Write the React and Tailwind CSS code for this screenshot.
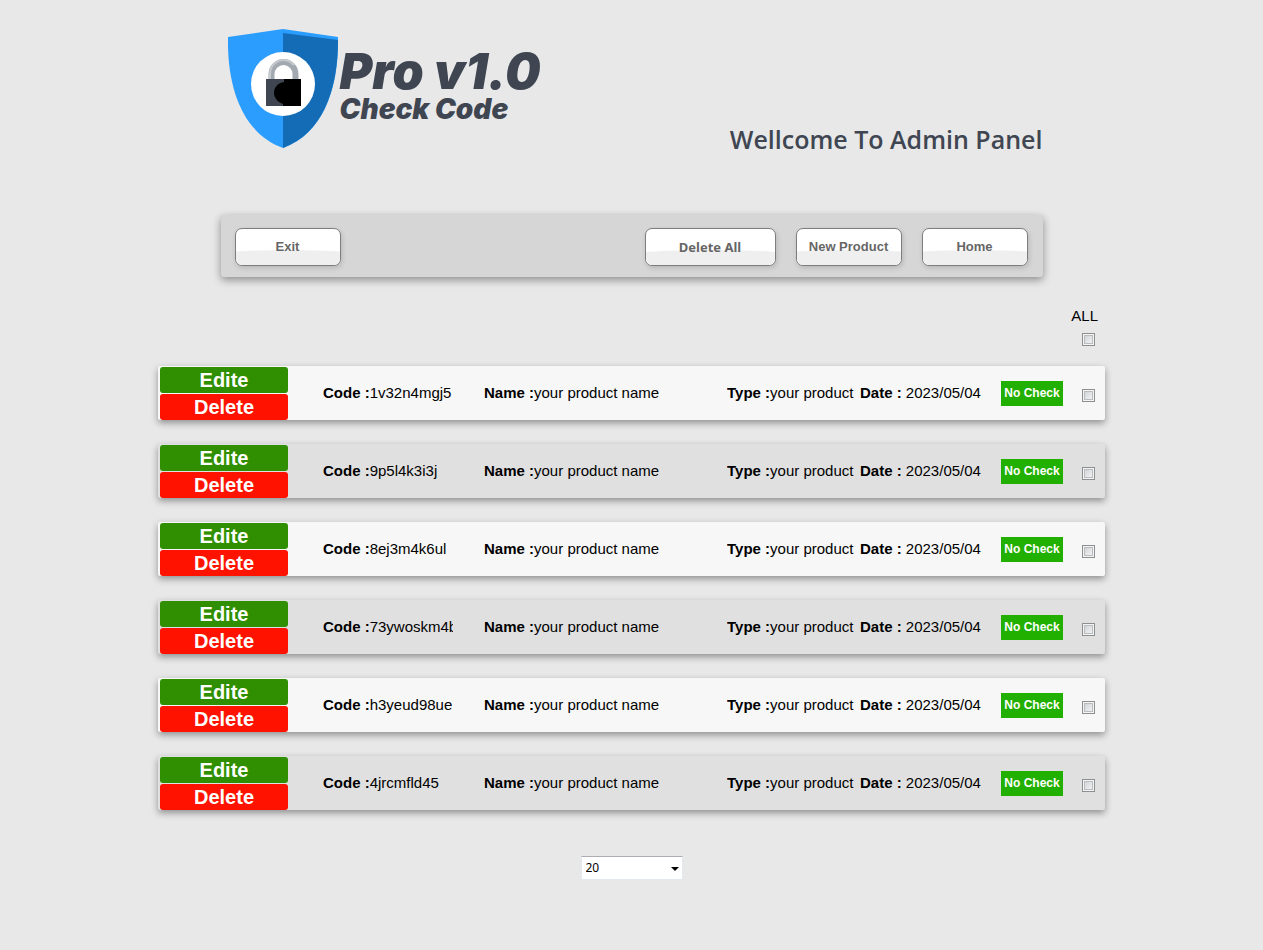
import { useState } from 'react';

const initialProducts = [
  { id: 1, code: '1v32n4mgj5', name: 'your product name', type: 'your product', date: '2023/05/04' },
  { id: 2, code: '9p5l4k3i3j', name: 'your product name', type: 'your product', date: '2023/05/04' },
  { id: 3, code: '8ej3m4k6ul', name: 'your product name', type: 'your product', date: '2023/05/04' },
  { id: 4, code: '73ywoskm4b', name: 'your product name', type: 'your product', date: '2023/05/04' },
  { id: 5, code: 'h3yeud98ue', name: 'your product name', type: 'your product', date: '2023/05/04' },
  { id: 6, code: '4jrcmfld45', name: 'your product name', type: 'your product', date: '2023/05/04' },
];

const ShieldLogo = () => (
  <svg viewBox="0 0 110 120" className="h-[120px] w-[110px] shrink-0" aria-hidden="true">
    <path d="M0 8 L55 0 L110 8 C111 58 96 104 55 119 C14 104 -1 58 0 8Z" fill="#2a9dff" />
    <path d="M55 4 L110 11 C110 60 95 104 55 119Z" fill="#146cb6" />
    <circle cx="55" cy="55" r="32" fill="#fff" />
    <path d="M43.5 50 V45 A12 12 0 0 1 67.5 45 V50" fill="none" stroke="#a3a9b0" strokeWidth="6" />
    <path d="M42 50 V45 A13.5 13.5 0 0 1 66 36" fill="none" stroke="#c6cacf" strokeWidth="2" />
    <rect x="38" y="50" width="35" height="27" fill="#3f4652" />
    <path d="M73 50 V77 H55 V75 C49 73 46 68 46 64 C46 58 50 54 56 53 V50Z" fill="#000" />
  </svg>
);

const NavButton = ({ children, className = 'w-[106px]' }) => (
  <button
    type="button"
    className={`${className} relative h-[38px] overflow-hidden rounded-[7px] border border-[#7d7d7d] bg-white font-bold text-[#666] shadow-[1px_2px_5px_rgba(0,0,0,0.15)]`}
  >
    <span className="absolute -inset-x-6 top-[21px] h-10 rounded-[50%_50%_0_0/6px_6px_0_0] bg-[#efefef]" />
    <span className="relative">{children}</span>
  </button>
);

const Tick = ({ label, checked, onChange, id }) => (
  <input
    id={id}
    type="checkbox"
    aria-label={label}
    checked={checked}
    onChange={onChange}
    className="block size-[13px] appearance-none border border-[#8e8f8f] bg-linear-to-br from-[#c9cccf] to-[#fafafa] shadow-[inset_0_0_0_1px_#f4f4f4,inset_0_0_0_2px_#b9bcc0] checked:from-[#3b6ea5] checked:to-[#3b6ea5]"
  />
);

const Field = ({ label, children }) => (
  <div className="overflow-hidden whitespace-nowrap">
    <b>{label}</b>
    {children}
  </div>
);

const App = () => {
  const [selected, setSelected] = useState([]);
  const [pageSize, setPageSize] = useState('20');

  const allSelected = selected.length === initialProducts.length;

  const toggle = (id) =>
    setSelected((prev) => (prev.includes(id) ? prev.filter((item) => item !== id) : [...prev, id]));

  const toggleAll = () => setSelected(allSelected ? [] : initialProducts.map((p) => p.id));

  return (
    <div className="min-h-screen bg-[#e8e8e8] pb-[70px] font-['Liberation_Sans',Arial,sans-serif] text-[15px] leading-5 text-black">
      <div className="mx-auto w-full max-w-[822px]">
        {/* Header */}
        <header className="flex items-start justify-between pt-[29px] pl-[7px] text-[#3f4652]">
          <div className="flex">
            <ShieldLogo />
            <div className="pt-[18px] pl-[2px] font-['Inter',sans-serif] font-black whitespace-nowrap italic">
              <div className="text-[50px] leading-[48px]">Pro v1.0</div>
              <div className="text-[28px] leading-7">Check Code</div>
            </div>
          </div>
          <h1 className="pt-[92px] font-['Open_Sans',sans-serif] text-[25px] leading-9 font-semibold whitespace-nowrap">
            Wellcome To Admin Panel
          </h1>
        </header>

        {/* Toolbar */}
        <nav className="mt-[58px] flex items-center justify-between rounded-[3px] bg-[#d6d6d6] pt-[13px] pr-[15px] pb-[11px] pl-[14px] text-[13px] shadow-[0_3px_8px_rgba(0,0,0,0.4)]">
          <NavButton>Exit</NavButton>
          <div className="flex gap-5">
            <NavButton className="w-[131px] font-['Noto_Sans',sans-serif]">Delete All</NavButton>
            <NavButton>New Product</NavButton>
            <NavButton>Home</NavButton>
          </div>
        </nav>
      </div>

      <main className="mx-auto w-full max-w-[947px]">
        <div className="flex flex-col items-end gap-[7px] pt-[29px] pr-[10px]">
          <label htmlFor="select-all" className="-mr-[3px]">ALL</label>
          <Tick id="select-all" label="ALL" checked={allSelected} onChange={toggleAll} />
        </div>

        {/* Product list */}
        <ul className="mt-5 flex flex-col gap-6">
          {initialProducts.map((product) => (
            <li
              key={product.id}
              className="grid h-[54px] grid-cols-[163px_161px_1fr_133px_141px_81px_23px] items-center rounded-[2px] bg-[#e0e0e0] pl-[2px] shadow-[0_3px_7px_rgba(0,0,0,0.38)] odd:bg-[#f7f7f7]"
            >
              <div className="flex w-[128px] flex-col gap-px text-xl leading-[26px] font-bold text-white">
                <button type="button" className="h-[26px] rounded-[3px] bg-[#2f8f00]">Edite</button>
                <button type="button" className="h-[26px] rounded-[3px] bg-[#ff1200]">Delete</button>
              </div>
              <div className="w-[130px]">
                <Field label="Code :">{product.code}</Field>
              </div>
              <Field label="Name :">{product.name}</Field>
              <Field label="Type :">{product.type}</Field>
              <Field label="Date : ">{product.date}</Field>
              <div className="h-[25px] w-[62px] bg-[#22b000] text-center text-xs leading-6 font-bold whitespace-nowrap text-white">
                No Check
              </div>
              <div className="pt-[5px]">
                <Tick
                  label={`Select ${product.code}`}
                  checked={selected.includes(product.id)}
                  onChange={() => toggle(product.id)}
                />
              </div>
            </li>
          ))}
        </ul>

        <div className="mt-[46px] flex justify-center">
          <div className="relative">
            <select
              aria-label="Products per page"
              value={pageSize}
              onChange={(e) => setPageSize(e.target.value)}
              className="block h-6 w-[102px] appearance-none border border-[#e3e9ef] border-t-[#abadb3] bg-white pl-1 font-['Noto_Sans',sans-serif] text-xs"
            >
              <option>20</option>
              <option>50</option>
              <option>100</option>
            </select>
            <svg viewBox="0 0 8 4" className="pointer-events-none absolute top-[11px] right-1 h-1 w-2" aria-hidden="true">
              <path d="M0 0H8L4 4Z" fill="#000" />
            </svg>
          </div>
        </div>
      </main>
    </div>
  );
};

export default App;
